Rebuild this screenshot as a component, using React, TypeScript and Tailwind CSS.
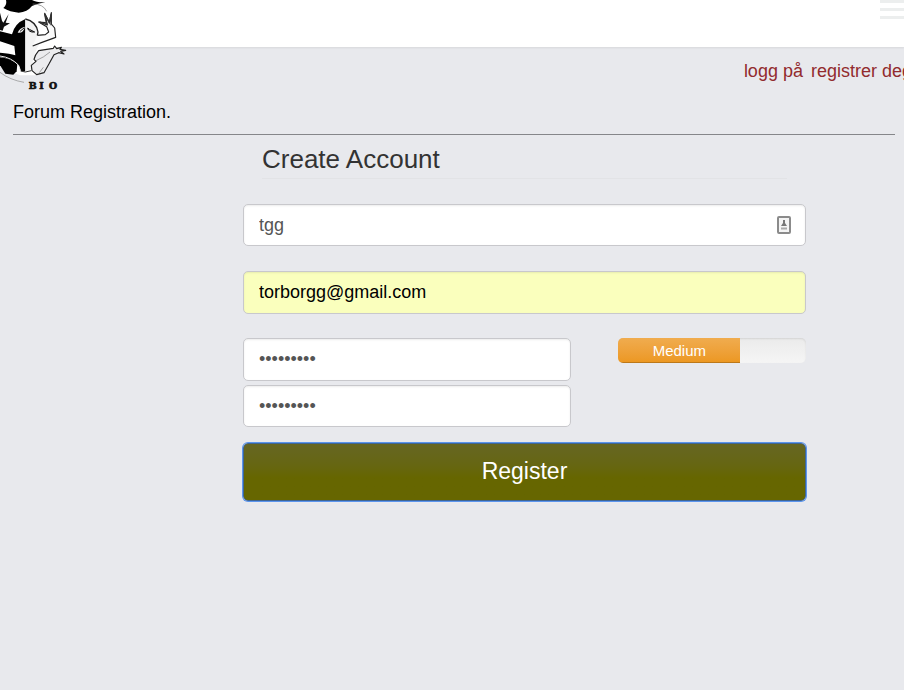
import { useState } from 'react';

const fieldClass =
  'block w-full rounded-[5px] border border-[#c8c8cc] px-[15px] text-lg leading-6 shadow-[inset_0_1px_2px_rgba(0,0,0,0.08)] outline-none';

function Logo() {
  return (
    <svg viewBox="0 0 204 276" className="absolute top-0 left-0 h-[92px] w-[68px]" role="img" aria-label="BIO">
      <path d="M0 0H130L158 40L168 108L158 160L135 216L105 226L60 226L0 200Z" fill="#fff" />
      <path d="M18 0H96Q110 8 136 7Q112 11 96 18Q82 36 56 38Q30 36 10 24Q22 14 18 0Z" fill="#000" />
      <path d="M98 12Q130 12 140 34" fill="none" stroke="#777" strokeWidth="2" />
      <path d="M0 38L6 62L10 68L26 42L17 68L30 70L12 80L8 92L0 90Z" fill="#111" />
      <path d="M0 94L36 103Q44 70 76 57V214L62 213L56 196Q40 178 0 170V158Q30 160 46 166L43 138L0 124Z" fill="#000" />
      <path d="M0 172Q30 174 52 192L50 214L40 224L16 221L0 196Z" fill="#000" />
      <path d="M0 168Q34 172 56 196L62 214" fill="none" stroke="#eee" strokeWidth="3" />
      <path d="M76 57Q108 64 114 96L120 128Q104 154 100 178L94 208L76 214Z" fill="#f2f2f2" />
      <path d="M76 57Q108 64 114 96L112 106" fill="none" stroke="#222" strokeWidth="4" />
      <path d="M53 98Q58 84 74 80Q72 100 53 98Z" fill="#eee" />
      <path d="M60 94L72 84" stroke="#111" strokeWidth="3" />
      <path d="M83 84Q86 98 104 96L88 88Z" fill="#999" stroke="#111" strokeWidth="3" />
      <path d="M112 106L136 104L146 96L140 80L116 66L136 68L142 74L134 40L148 68L154 38L154 72L164 84L167 112L124 128L98 138" fill="#fafafa" stroke="#222" strokeWidth="3.500" strokeLinejoin="round" />
      <path d="M118 66L140 74L134 42L148 68L154 42L153 76" fill="none" stroke="#333" strokeWidth="4" />
      <path d="M160 145L116 152Q104 166 102 178L108 184L94 196L96 212L110 224L132 218L148 190L162 164L176 158L192 162L182 154L197 151L180 148L184 142L170 146L164 138Z" fill="#ececee" stroke="#222" strokeWidth="3.500" strokeLinejoin="round" />
      <path d="M108 182Q132 172 150 156M118 218L130 202" fill="none" stroke="#777" strokeWidth="2" />
      <path d="M62 213L76 216L94 212" fill="none" stroke="#333" strokeWidth="3" />
      <path d="M0 217Q30 240 72 247" fill="none" stroke="#888" strokeWidth="2" />
      <text x="84" y="267" fontFamily="DejaVu Serif, serif" fontWeight="700" fontSize="28" fill="#111" stroke="#111" strokeWidth="2">
        <tspan x="86">B</tspan>
        <tspan x="118">I</tspan>
        <tspan x="147">O</tspan>
      </text>
    </svg>
  );
}

function Header() {
  return (
    <header className="relative flex h-[47px] justify-end bg-white shadow-[0_1px_2px_rgba(0,0,0,0.08)]">
      <Logo />
      <button type="button" aria-label="Menu" className="flex w-6 flex-col gap-[5px] self-start">
        <span className="h-[3px] w-full bg-[#eceeee]" />
        <span className="h-[3px] w-full bg-[#eceeee]" />
        <span className="h-[3px] w-full bg-[#eceeee]" />
      </button>
    </header>
  );
}

export default function App() {
  const [name, setName] = useState('tgg');
  const [email, setEmail] = useState('torborgg@gmail.com');
  const [password, setPassword] = useState('forumpass');
  const [repeat, setRepeat] = useState('forumpass');

  return (
    <div className="min-h-screen overflow-hidden bg-[#e8e9ed] font-['Liberation_Sans',Arial,sans-serif] text-black">
      <Header />
      <nav className="-mr-2 flex justify-end gap-2 pt-3 text-lg leading-6 whitespace-nowrap text-[#922b2e]">
        <a href="#login">logg på</a>
        <a href="#register">registrer deg</a>
      </nav>
      <main className="mr-[9px] ml-[13px] pt-[17px]">
        <p className="border-b border-[#85868a] pb-[10px] text-lg leading-6">Forum Registration.</p>
        <form className="mr-[89px] ml-[230px]" onSubmit={(e) => e.preventDefault()}>
          <h1 className="mx-[19px] border-b border-[#e2e3e6] pt-2 pb-[3px] text-[26px] leading-8 text-[#333]">Create Account</h1>
          <div className="mt-[25px] flex items-center rounded-[5px] border border-[#c8c8cc] bg-white pr-[13px] shadow-[inset_0_1px_2px_rgba(0,0,0,0.08)]">
            <input
              aria-label="User name"
              className="h-10 min-w-0 flex-1 bg-transparent px-[15px] text-lg leading-6 text-[#555] outline-none"
              value={name}
              onChange={(e) => setName(e.target.value)}
            />
            <svg viewBox="0 0 16 20" className="h-5 w-4 shrink-0" aria-hidden="true">
              <rect x="2" y="2" width="12" height="16" rx="1" fill="#f4f4f4" stroke="#8b8b8b" strokeWidth="2" />
              <path d="M7 5H9V8L11 11H5L7 8Z" fill="#777" />
              <path d="M5 13.500H11" stroke="#aaa" strokeWidth="2" />
            </svg>
          </div>
          <input
            type="email"
            aria-label="Email"
            className={`${fieldClass} mt-[25px] h-[43px] bg-[#faffbd] text-black`}
            value={email}
            onChange={(e) => setEmail(e.target.value)}
          />
          <div className="mt-6 grid grid-cols-[7fr_4fr] gap-x-[47px]">
            <div className="flex flex-col gap-1">
              <input
                type="password"
                aria-label="Password"
                className={`${fieldClass} h-[43px] bg-white text-[#555]`}
                value={password}
                onChange={(e) => setPassword(e.target.value)}
              />
              <input
                type="password"
                aria-label="Repeat password"
                className={`${fieldClass} h-[42px] bg-white text-[#555]`}
                value={repeat}
                onChange={(e) => setRepeat(e.target.value)}
              />
            </div>
            <div
              role="progressbar"
              aria-label="Password strength"
              aria-valuenow={65}
              className="h-[25px] overflow-hidden rounded-[5px] bg-linear-to-b from-[#ebebeb] to-[#f5f5f5] shadow-[inset_0_1px_2px_rgba(0,0,0,0.1)]"
            >
              <div className="h-full w-[65%] bg-linear-to-b from-[#f0ac4e] to-[#ec971f] text-center text-[15px] leading-[26px] text-white shadow-[inset_0_-1px_0_rgba(0,0,0,0.2)]">
                Medium
              </div>
            </div>
          </div>
          <button
            type="submit"
            className="mt-4 block h-[58px] w-full rounded-[5px] border border-[#3f6592] bg-linear-to-b from-[#666622] to-[#666600] to-60% pb-0.5 text-[23px] leading-8 text-white shadow-[0_0_0_1px_#5b95ee]"
          >
            Register
          </button>
        </form>
      </main>
    </div>
  );
}
